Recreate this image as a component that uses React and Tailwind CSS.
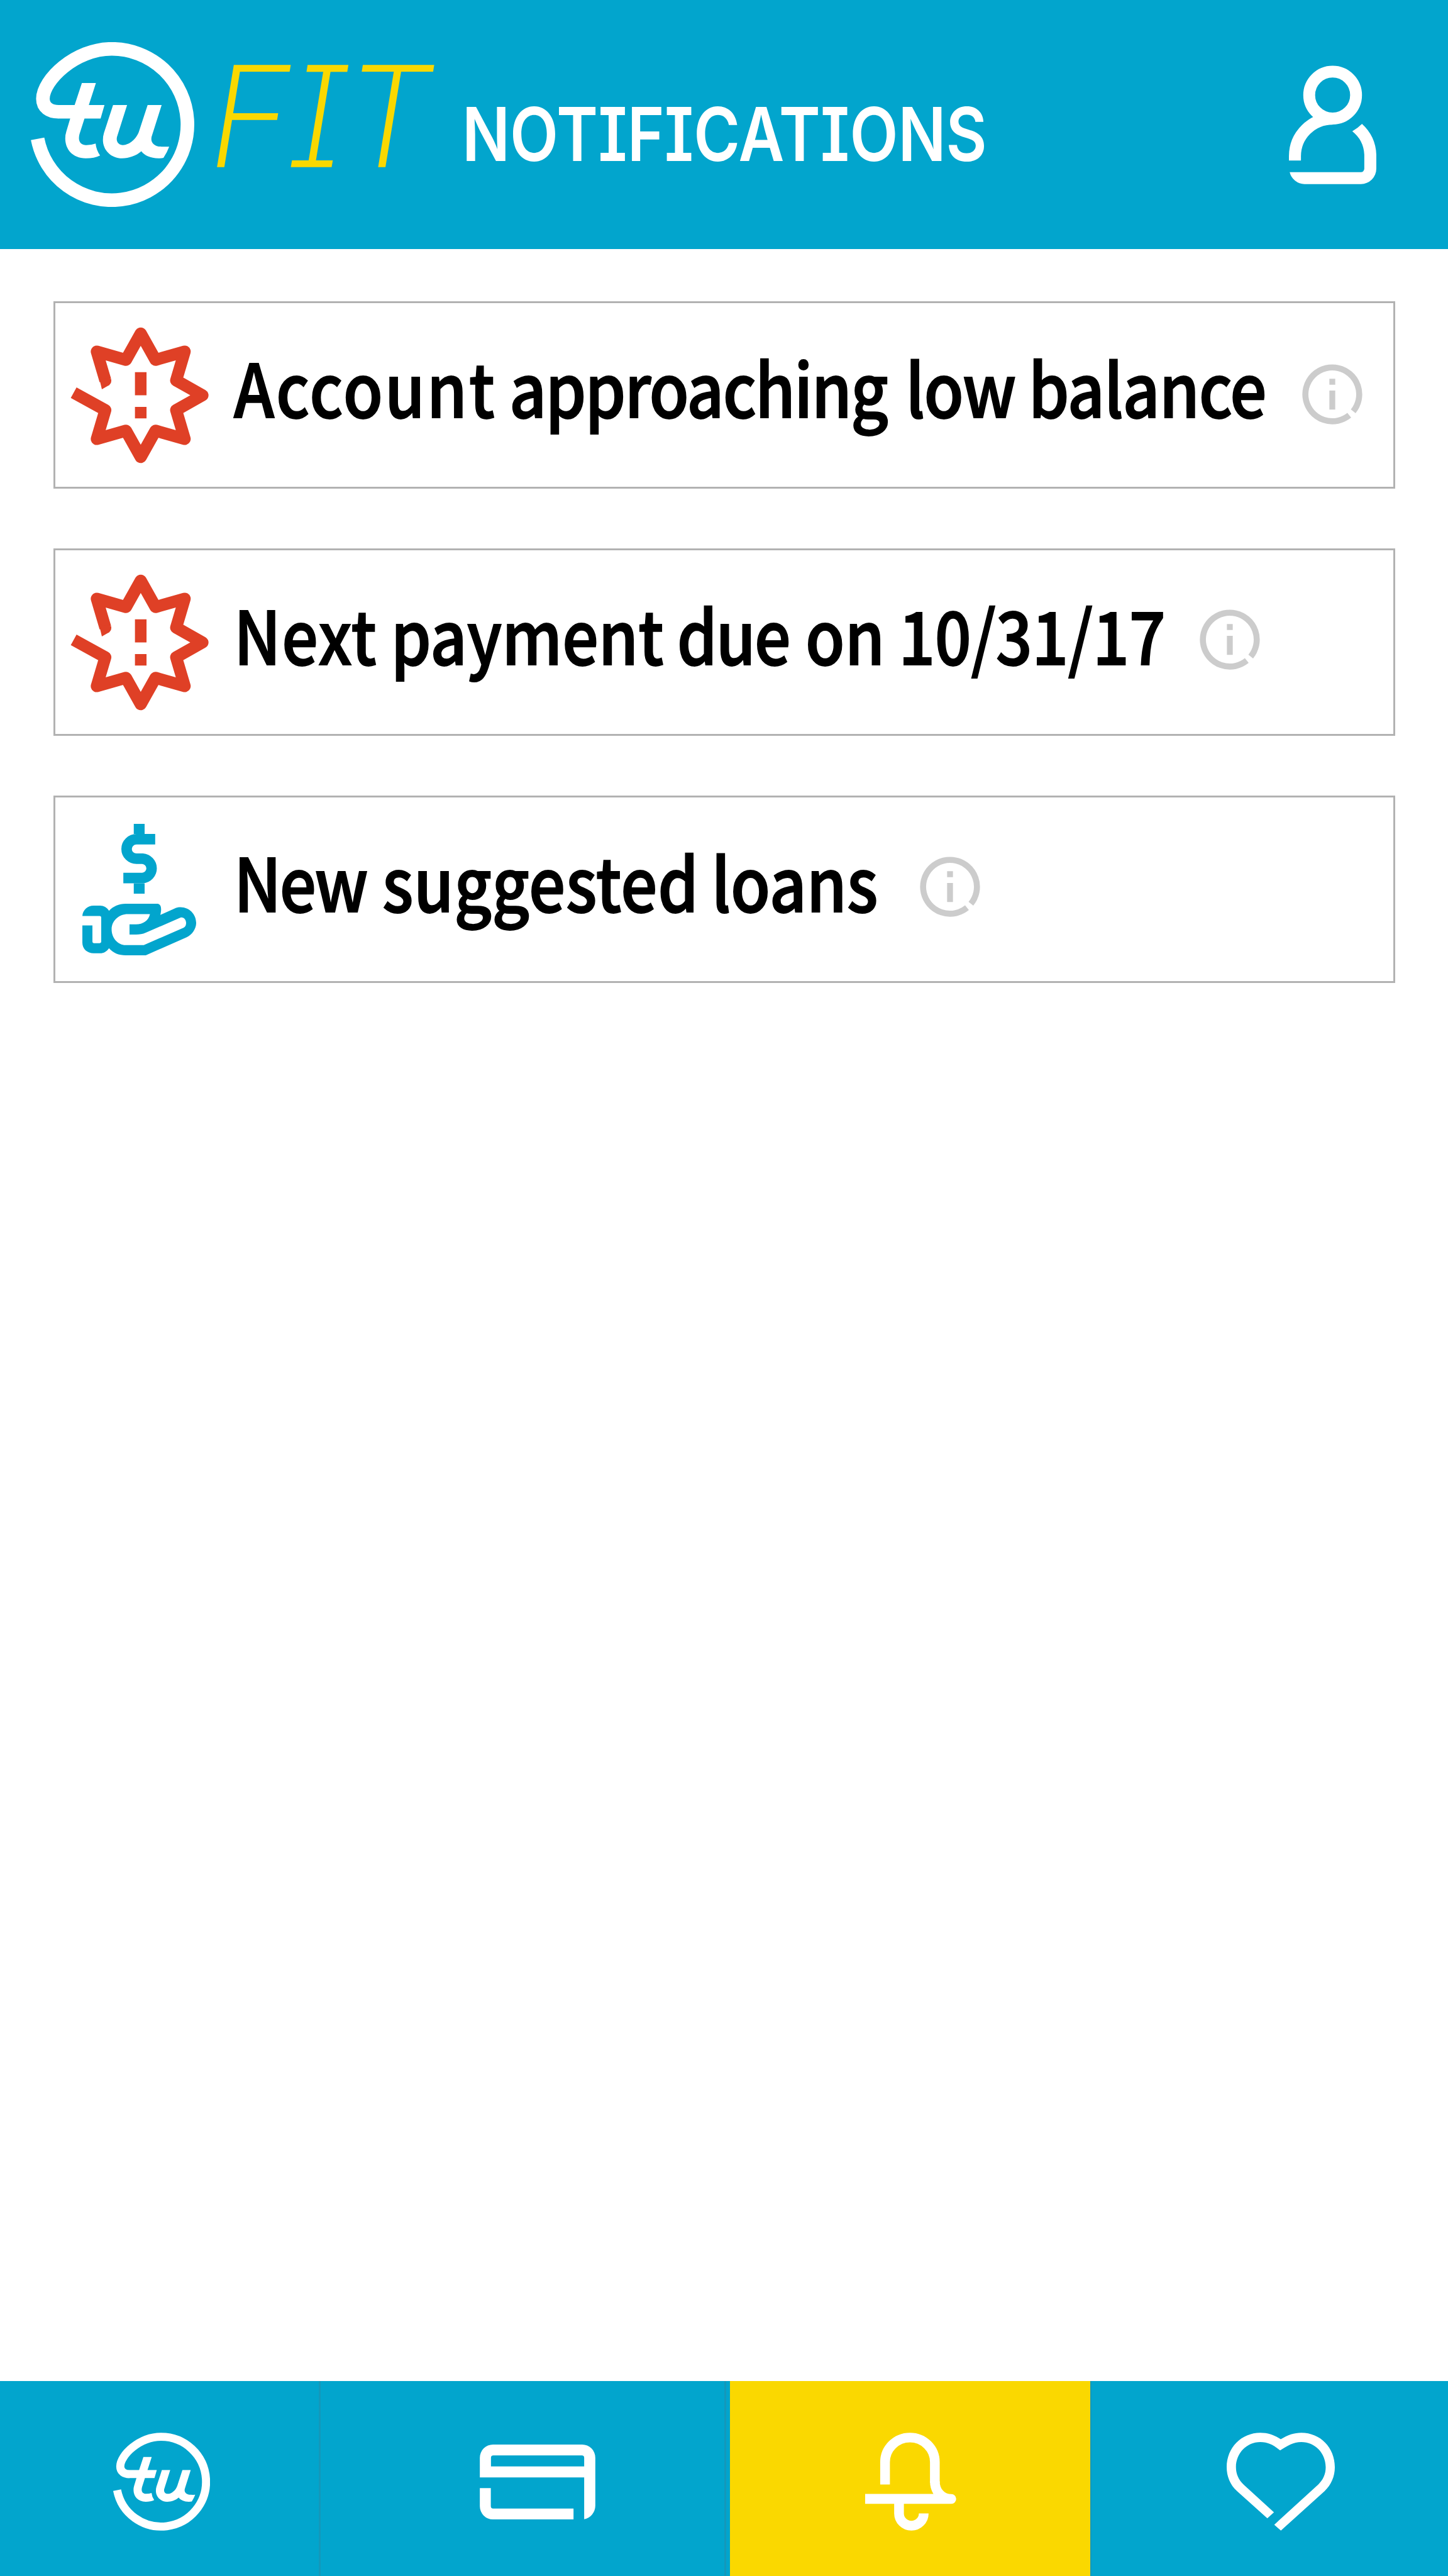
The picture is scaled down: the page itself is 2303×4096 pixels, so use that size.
import React from "react";

function LogoMark({ className }) {
  return (
    <svg className={className} viewBox="191 444 628 634" fill="white">
      <path
        d="M216.5 816A291 291 0 1 0 502 470C360 470 237 590 237 662C237 695 262 712 297 712"
        fill="none"
        stroke="white"
        strokeWidth="52.5"
      />
      <path d="M296 686H474L459 738H296Z" />
      <path d="M387 601H441L397 738L378 797C370 828 385 840 405 840Q425 840 440 834Q442 858 457 880Q435 891 402 891C350 891 323 855 323 815Q323 800 327 788L342 738Z" />
      <path d="M507 686H561L524 803C515 825 528 840 545 840C570 840 598 815 607 787L640 686H694L657 803C648 826 662 846 693 846Q710 847 723 846Q715 868 701 889Q693 891 682 891C650 891 628 880 616 864C595 882 568 891 542 891C500 891 468 860 468 820Q468 806 472 793Z" />
    </svg>
  );
}

function PersonIcon() {
  return (
    <svg className="h-[189px] w-[139px]" viewBox="249 122 567 768" fill="white">
      <circle cx="532.5" cy="313" r="152" fill="none" stroke="white" strokeWidth="77" />
      <path d="M288 738V709A244 244 0 0 1 532 465.5" fill="none" stroke="white" strokeWidth="78" />
      <path d="M723 500A283 283 0 0 1 816 700V790A100 100 0 0 1 716 890H350A100 100 0 0 1 254 813H716A22 22 0 0 0 738 791V700A205 205 0 0 0 660 548Q695 528 723 500Z" />
    </svg>
  );
}

function AlertIcon() {
  return (
    <svg className="h-[217px] w-[220px]" viewBox="-152 -147 299 294">
      <path
        d="M-76.5 -32L-95 -94.5L-32 -76.5L0 -133.5L32 -76.5L95 -94.5L76.5 -32L133.5 0L76.5 32L95 94.5L32 76.5L0 133.5L-32 76.5L-95 94.5L-76.5 32L-145 -5.5"
        fill="none"
        stroke="#df4026"
        strokeWidth="26"
        strokeLinejoin="round"
      />
      <path d="M-90 -38L-84 -13L-68 -22Q-62 -28 -64 -35Z" fill="#df4026" />
      <path d="M-12.5 -50H12.5V0H-12.5ZM-12.5 25H12.5V50H-12.5Z" fill="#df4026" />
    </svg>
  );
}

function LoanIcon() {
  return (
    <svg className="mr-[2px] h-[209px] w-[181px]" viewBox="177.2 77 245.5 283.3" fill="#02a5cd">
      <path d="M299.8 77V98.7M299.8 205V227.3" stroke="#02a5cd" strokeWidth="23.4" />
      <path
        d="M334.3 110H294A21.4 21 0 0 0 294 152H307A21 20.9 0 0 1 307 193.7H265.6"
        fill="none"
        stroke="#02a5cd"
        strokeWidth="22.6"
      />
      <path
        fillRule="evenodd"
        d="M177.2 275.7C178 263 188 253.3 201.7 253.3H215.7C223 253.3 230 257 234.7 264.3C243 255 256 249 270.5 249H338.5C345 249 347.5 255 347 263.3Q346.5 269 345.5 273.3L375 260C380 257.5 384 256.7 389 256.7C408 256.7 422.7 272 422.7 290.7C422.7 303 414 316 401.6 321.7L314 360.3H270.5C256 360.3 243 355 234.7 345C230 352 223 356 215.7 356H201.7C188 356 177.2 347 177.2 333.3V296H198.9V331Q198.9 334.3 202 334.3H214.5Q217.9 334.3 217.9 331V279Q217.9 275.7 214.5 275.7ZM323 271.7H275.4C256 271.7 240.3 286 240.3 304.3C240.3 323 254 338.3 270.5 338.3H309.7L396 300.7C400 298.5 401 294.5 401 290.7C401 284 396 277.5 389 279L314 311.7C307 314.7 301 315.7 292.9 315.7H278.9V293.7H292.9C308 293.7 320 286 323 271.7Z"
      />
    </svg>
  );
}

function InfoIcon({ className }) {
  return (
    <svg className={className} viewBox="-65 -65 130 130">
      <path d="M45 36.6A58 58 0 1 0 36.5 45.1" fill="none" stroke="#cccccc" strokeWidth="13" />
      <path d="M-6.3 -33.5H6.3V-20.5H-6.3ZM-6.3 -8H6.3V33H-6.3Z" fill="#cccccc" />
    </svg>
  );
}

function CardIcon() {
  return (
    <svg className="h-[119px] w-[184px]" viewBox="168 219 747 484" fill="white">
      <path
        fillRule="evenodd"
        d="M168 432V304A85 85 0 0 1 253 219H830A85 85 0 0 1 915 304V615A90 90 0 0 1 843 702V432ZM240 360.5H843V304A15 15 0 0 0 828 289.5H255A15 15 0 0 0 240 304Z"
      />
      <path d="M168 501H239V618A15 15 0 0 0 254 633H774V703H253A85 85 0 0 1 168 618Z" />
    </svg>
  );
}

function BellIcon() {
  return (
    <svg className="h-[156px] w-[145px]" viewBox="308 128 197 211.5" fill="white">
      <path d="M351 239.7V191.7A53.8 53.2 0 0 1 458.6 191.7V236" fill="none" stroke="white" strokeWidth="21" />
      <path d="M448.1 233H469.1C469.1 250 480 260.5 494.2 260.7A10.5 10.5 0 0 1 494.2 281.7H308V260.3H455.5Q448.1 248 448.1 233Z" />
      <path d="M381.2 281V302.3A26.7 26.6 0 0 0 434.6 302.3" fill="none" stroke="white" strokeWidth="21" />
    </svg>
  );
}

function HeartIcon() {
  return (
    <svg className="h-[156px] w-[172px]" viewBox="144 144 700 633" fill="white">
      <path d="M407 698L212 523C165 480 144 425 144 367C144 240 240 144 362 144C415 144 455 160 494 186C540 158 580 144 627 144C750 144 844 240 844 367C844 428 820 480 778 522L495 777L452 739L737 479C768 448 785 412 785 367C785 275 715 204 627 204C575 204 540 228 490 258C445 222 412 204 362 204C275 204 204 275 204 367C204 412 222 450 255 481L450 659Z" />
    </svg>
  );
}

const notices = [
  {
    id: "balance",
    icon: AlertIcon,
    width: "w-[1699px]",
    info: "-mt-[3px]",
    fit: "scale-x-[0.884]",
    words: [
      ["Account", "tracking-[3.2px] mr-[-3px]"],
      ["approaching", "tracking-[-2.2px] mr-[7px]"],
      ["low", "tracking-[-1.5px] mr-[-3px]"],
      ["balance", "tracking-[-1.3px]"],
    ],
  },
  {
    id: "payment",
    icon: AlertIcon,
    width: "w-[1536px]",
    info: "-mt-[9px]",
    fit: "scale-x-[0.873]",
    words: [
      ["Next", "tracking-[1.8px] mr-[-2px]"],
      ["payment", "mr-[-2px]"],
      ["due", "tracking-[-2.3px] mr-[3px]"],
      ["on", "mr-[-1px]"],
      ["10/31/17", "tracking-[-0.5px]"],
    ],
  },
  {
    id: "loans",
    icon: LoanIcon,
    width: "w-[1091px]",
    info: "-mt-[9px]",
    fit: "scale-x-[0.882]",
    words: [
      ["New", "tracking-[-3px] mr-[2px]"],
      ["suggested", "tracking-[0.8px] mr-[-4px]"],
      ["loans", ""],
    ],
  },
];

export default function App() {
  return (
    <div className="flex h-[4096px] w-[2303px] flex-col overflow-hidden bg-white">
      <header className="flex h-[396px] shrink-0 items-start bg-[#02a5cd] pl-[49px]">
        <LogoMark className="mt-[67px] h-[262px] w-[260px]" />
        <span className="mt-[74px] ml-[24px] w-[402px] origin-left scale-x-[0.992] font-['Inter'] text-[221px] leading-none [font-weight:250] text-[#fad800] italic [font-feature-settings:'cv08'] [-webkit-text-stroke:1.5px_#fad800]">
          FIT
        </span>
        <h1 className="mt-[154px] w-[1315px] origin-left scale-x-[0.845] font-['Inter'] text-[118.6px] leading-none font-semibold whitespace-nowrap text-white [font-feature-settings:'cv08']">
          NOTIFICATIONS
        </h1>
        <div className="mt-[104px]">
          <PersonIcon />
        </div>
      </header>

      <main className="flex flex-1 flex-col gap-[95px] pt-[83px] pr-[84px] pl-[85px]">
        {notices.map(({ id, icon: Icon, words, width, info, fit }) => (
          <section key={id} className="flex h-[298px] items-center border-[3px] border-[#b2b2b2]">
            <div className="flex w-[268px] shrink-0 justify-center">
              <Icon />
            </div>
            <div className={`ml-[16px] shrink-0 pb-[28px] ${width}`}>
              <p
                className={`origin-left font-['Noto_Sans_CJK_SC',sans-serif] text-[116.6px] leading-none font-medium whitespace-nowrap text-black [-webkit-text-stroke:2px_black] ${fit}`}
              >
                {words.map(([word, spacing], i) => (
                  <React.Fragment key={word}>
                    {i > 0 && " "}
                    <span className={spacing}>{word}</span>
                  </React.Fragment>
                ))}
              </p>
            </div>
            <InfoIcon className={`size-[96px] shrink-0 ${info}`} />
          </section>
        ))}
      </main>

      <nav className="flex h-[310px] shrink-0 bg-[#02a5cd]">
        <div className="flex w-[510px] items-center justify-center border-r-[3px] border-[#1498ba] pt-[10px] pl-[6px]">
          <LogoMark className="h-[156px] w-[154px]" />
        </div>
        <div className="flex w-[645px] items-center justify-center border-r-[3px] border-[#1498ba] pt-[10px] pl-[48px]">
          <CardIcon />
        </div>
        <div className="ml-[6px] flex w-[573px] items-center justify-center bg-[#fad800] pt-[10px] pl-[2px]">
          <BellIcon />
        </div>
        <div className="flex flex-1 items-center justify-center border-l-2 border-[#1498ba] pt-[10px] pl-[34px]">
          <HeartIcon />
        </div>
      </nav>
    </div>
  );
}
